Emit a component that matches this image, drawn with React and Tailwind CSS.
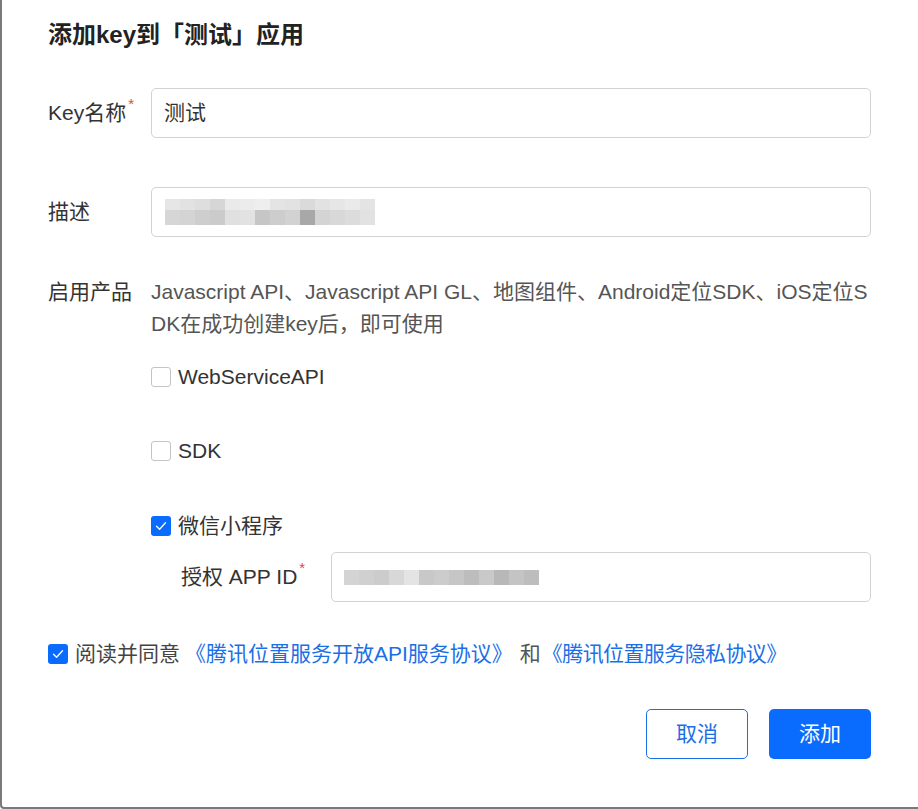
import React from 'react';

const CJK = "font-['Liberation_Sans','Noto_Sans_CJK_SC',sans-serif]";

// mosaic blocks for the blurred values
const DESC_TOP = ['#e6e6e6','#e2e2e2','#dedede','#d6d6d6','#eaeaea','#ececec','#eeeeee','#e4e4e4','#e2e2e2','#dadada','#e2e2e2','#e6e6e6','#eaeaea','#e4e4e4'];
const DESC_BOT = ['#d6d6d6','#d4d4d4','#cecece','#cbcbcb','#e0e0e0','#e2e2e2','#c6c6c6','#cdcdcd','#d2d2d2','#a8a8a8','#d4d4d4','#d8d8d8','#dcdcdc','#e2e2e2'];
const APPID = ['#d4d4d4','#d0d0d0','#cccccc','#d8d8d8','#e4e4e4','#c8c8c8','#cccccc','#c6c6c6','#bdbdbd','#c9c9c9','#b8b8b8','#c4c4c4','#bdbdbd'];

function Mosaic({ rows }) {
  return (
    <div className="flex flex-col">
      {rows.map((r, i) => (
        <div key={i} className="flex">
          {r.cols.map((c, j) => (
            <div key={j} className={r.h} style={{ width: 15, background: c }} />
          ))}
        </div>
      ))}
    </div>
  );
}

function Check({ checked }) {
  return checked ? (
    <span className="w-[20px] h-[20px] rounded-[3px] bg-[#0a6cff] flex items-center justify-center shrink-0">
      <svg width="12" height="10" viewBox="0 0 12 10" fill="none">
        <path d="M1.5 5.2L4.6 8.2L10.5 1.8" stroke="white" strokeWidth="1.3" strokeLinecap="round" strokeLinejoin="round" />
      </svg>
    </span>
  ) : (
    <span className="w-[20px] h-[20px] rounded-[3px] border border-[#c4c4c4] bg-white shrink-0" />
  );
}

function Req() {
  return <span className="text-[#e54545] text-[15px] relative -top-[9px] ml-[2px]">*</span>;
}

export default function App() {
  return (
    <div className={`w-[918px] h-[809px] bg-white border-l-2 border-b-2 border-[#7a7a7a] rounded-bl-[4px] ${CJK} text-[#333]`}>
      <div className="pl-[46px] pr-[47px] pt-[19px]">
        <h1 className="text-[24px] leading-[32px] font-bold text-[#222]">添加key到「测试」应用</h1>

        {/* Key name */}
        <div className="flex items-center mt-[37px] h-[50px]">
          <label className="w-[103px] text-[21px] flex items-center">Key名称<Req /></label>
          <div className="flex-1 h-[50px] border border-[#d2d2d2] rounded-[5px] flex items-center px-[12px] text-[21px] text-[#333]">
            测试
          </div>
        </div>

        {/* description */}
        <div className="flex items-center mt-[49px] h-[50px]">
          <label className="w-[103px] text-[21px]">描述</label>
          <div className="flex-1 h-[50px] border border-[#d2d2d2] rounded-[5px] flex items-center pl-[13px]">
            <Mosaic rows={[{ h: 'h-[11px]', cols: DESC_TOP }, { h: 'h-[15px]', cols: DESC_BOT }]} />
          </div>
        </div>

        {/* products */}
        <div className="flex mt-[39px]">
          <label className="w-[103px] text-[21px] leading-[32px]">启用产品</label>
          <div className="flex-1 text-[21px] leading-[32px] text-[#555] break-all">
            Javascript API、Javascript API GL、地图组件、Android定位SDK、iOS定位SDK在成功创建key后，即可使用
          </div>
        </div>

        <div className="pl-[103px] text-[21px] text-[#333]">
          <div className="flex items-center gap-[7px] h-[30px] mt-[22px]">
            <Check /> <span>WebServiceAPI</span>
          </div>
          <div className="flex items-center gap-[7px] h-[30px] mt-[44px]">
            <Check /> <span>SDK</span>
          </div>
          <div className="flex items-center gap-[7px] h-[30px] mt-[45px]">
            <Check checked /> <span>微信小程序</span>
          </div>
          <div className="flex items-center mt-[11px] h-[50px]">
            <label className="w-[180px] pl-[30px] flex items-center">授权 APP ID<Req /></label>
            <div className="flex-1 h-[50px] border border-[#d2d2d2] rounded-[5px] flex items-center pl-[12px]">
              <Mosaic rows={[{ h: 'h-[15px]', cols: APPID }]} />
            </div>
          </div>
        </div>

        {/* agreement */}
        <div className="flex items-center gap-[7px] mt-[37px] h-[30px] text-[21px]">
          <Check checked />
          <span className="text-[#444]">阅读并同意</span>
          <span className="text-[#1a6fe6] -ml-[2px]">《腾讯位置服务开放API服务协议》</span>
          <span className="text-[#555]">和</span>
          <span className="text-[#1a6fe6] -ml-[6px] tracking-[-0.6px]">《腾讯位置服务隐私协议》</span>
        </div>

        {/* actions */}
        <div className="flex justify-end gap-[21px] mt-[40px]">
          <button className="w-[102px] h-[50px] rounded-[5px] border border-[#1a6fe6] text-[#1a6fe6] text-[21px] bg-white">取消</button>
          <button className="w-[102px] h-[50px] rounded-[5px] bg-[#0a6cff] text-white text-[21px]">添加</button>
        </div>
      </div>
    </div>
  );
}
